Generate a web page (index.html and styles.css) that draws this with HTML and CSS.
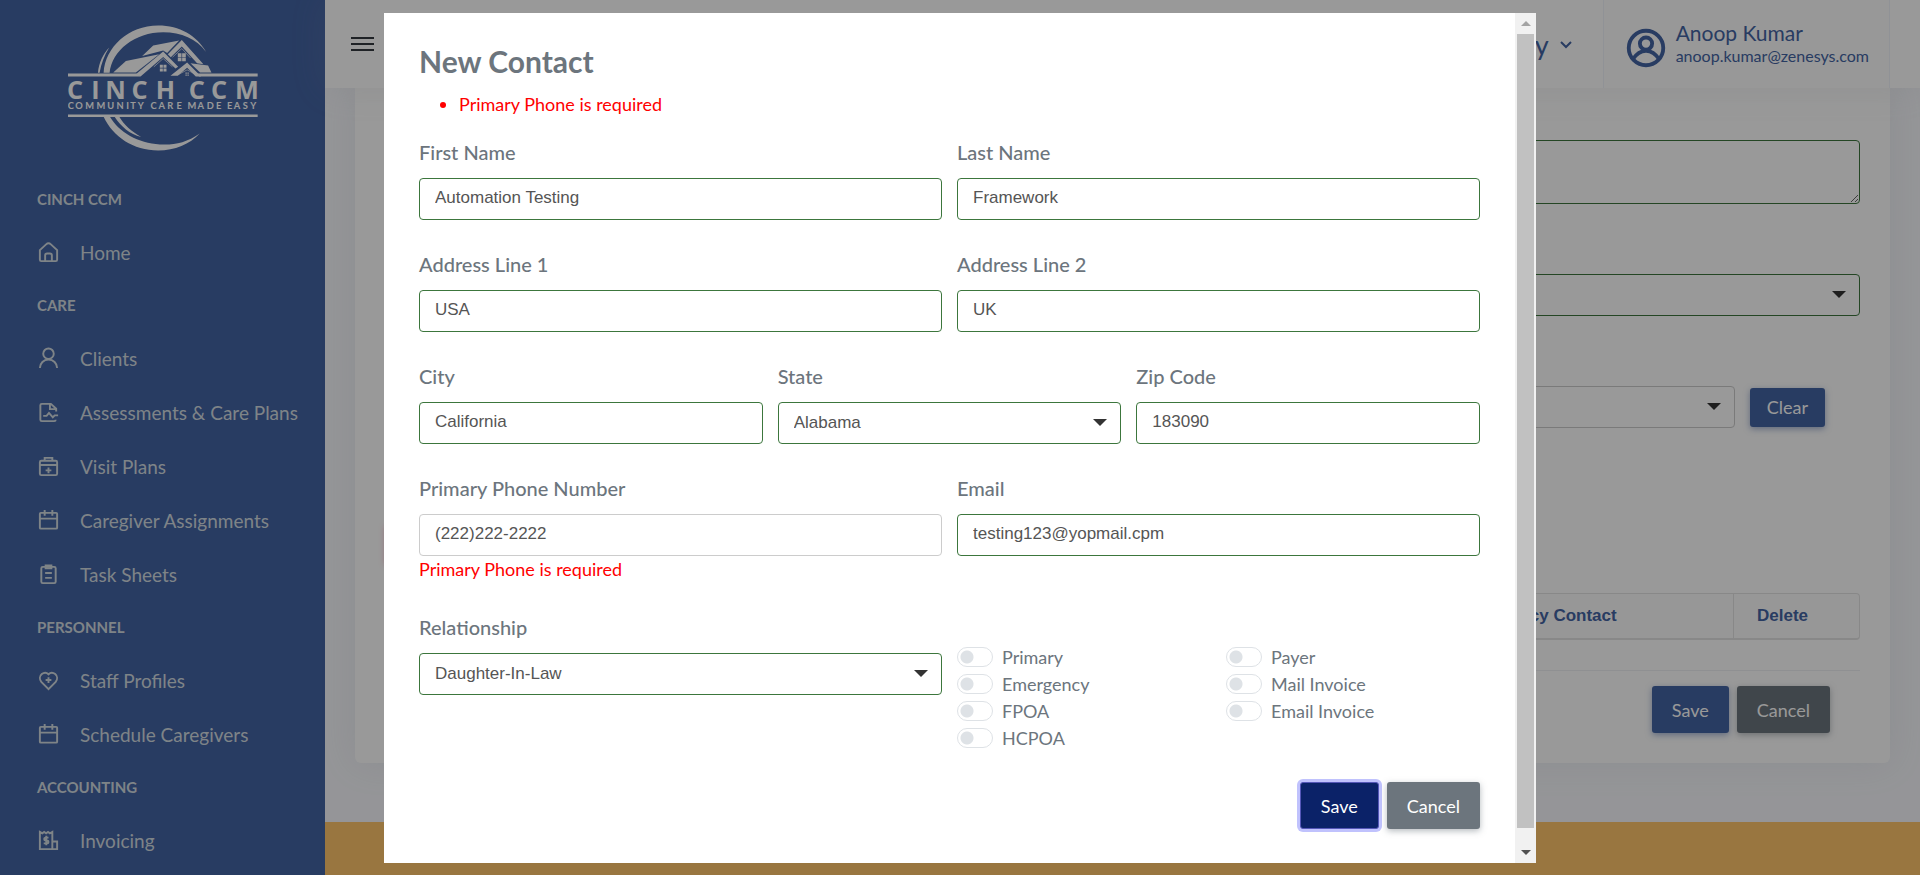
FILE: index.html
```html
<!DOCTYPE html>
<html lang="en">
<head>
<meta charset="utf-8">
<meta name="viewport" content="width=device-width, initial-scale=1">
<title>Cinch CCM - New Contact</title>
<link rel="stylesheet" href="styles.css">
</head>
<body>
<div class="app">
  <nav class="sidebar" aria-label="Main">
    <a class="logo" href="#" aria-label="Cinch CCM">
      <svg viewBox="204 74 571 377" width="190" height="126" fill="currentColor">
        <path d="M311 217C316 140 385 75 475 75C540 75 590 105 619 154C590 115 545 95 490 95C405 95 336 150 329 217Z"/>
        <path d="M294 217C297 187 309 160 328 141C313 164 304 190 299 217Z"/>
        <path d="M311 349C340 410 400 450 475 450C525 450 570 431 600 399C560 427 520 435 480 432C415 428 357 396 330 349Z"/>
        <path d="M344 349C362 377 390 402 424 410C397 395 371 372 358 349Z"/>
        <path d="M204 219H410L422 228H204ZM588 219H774V228H598ZM204 342H774V350H204Z"/>
        <path d="M340 216L378 181L478 161L408 216Z"/>
        <path d="M490 153L535 199L527 204L490 169L422 228L408 221Z"/>
        <path d="M427 166L460 135L538 120L502 157L490 150Z"/>
        <path d="M546 118L611 191L592 188L546 138L513 170L504 161Z"/>
        <path d="M562 186L604 228H588L562 202L534 226H512Z"/>
        <path d="M572 188L625 195L635 216H601Z"/>
        <path d="M534 158h11v11h-11zM547 158h11v11h-11zM534 171h11v11h-11zM547 171h11v11h-11zM480 193h9v9h-9zM491 193h9v9h-9zM480 204h9v9h-9zM491 204h9v9h-9zM557 216h4v4h-4zM563 216h4v4h-4zM557 222h4v4h-4zM563 222h4v4h-4z"/>
        <path d="M462 199L490 174L518 199M518 170L546 144L572 172M536 222L562 208L588 222" fill="none" stroke="currentColor" stroke-width="2"/>
        <text class="logo-name" y="296" x="201 274 316 395 468 513 567 634 706">CINCH CCM</text>
        <text class="logo-tag" y="327" x="203 226 256 290 322 350 379 391 414 436 452 476 502 530 545 563 593 621 649 665 682 702 729 752">COMMUNITY CARE MADE EASY</text>
      </svg>
    </a>
    <h2 class="nav-heading">CINCH CCM</h2>
    <ul class="nav-list">
      <li><a href="#"><svg class="icon" viewBox="0 0 24 24"><path d="M3 9.500L9.500 3.500Q12 1.200 14.500 3.500L21 9.500V19.500Q21 21 19.500 21H4.500Q3 21 3 19.500ZM8.500 21V15Q8.500 13 10.500 13H13.500Q15.500 13 15.500 15V21"/></svg>Home</a></li>
    </ul>
    <h2 class="nav-heading">CARE</h2>
    <ul class="nav-list">
      <li><a href="#"><svg class="icon" viewBox="0 0 24 24"><circle cx="12" cy="7" r="5.500"/><path d="M3 22a9 9 0 0 1 18 0"/></svg>Clients</a></li>
      <li><a href="#"><svg class="icon" viewBox="0 0 24 24"><path d="M20 11V8L14.500 3H5Q3.500 3 3.500 4.500V19.500Q3.500 21 5 21H18Q19.500 21 19.500 19.500M13.500 3V8.500H20M6.500 15.500H10L12.500 12.500L16.500 17L18.500 15H22"/></svg>Assessments &amp; Care Plans</a></li>
      <li><a href="#"><svg class="icon" viewBox="0 0 24 24"><rect x="3" y="6" width="18" height="15" rx="1.500"/><path d="M8 6V3H16V6M3 10.500H21M12 13V19M9 16H15"/></svg>Visit Plans</a></li>
      <li><a href="#"><svg class="icon" viewBox="0 0 24 24"><rect x="3" y="4" width="18" height="16.500" rx="1"/><path d="M3 10H21M8 1V7M16 1V7"/></svg>Caregiver Assignments</a></li>
      <li><a href="#"><svg class="icon" viewBox="0 0 24 24"><rect x="4.500" y="4" width="15" height="17" rx="1.500"/><path d="M9 2.500H15V5.500H9ZM8.500 10.500H15.500M8.500 15.500H15.500"/></svg>Task Sheets</a></li>
    </ul>
    <h2 class="nav-heading">PERSONNEL</h2>
    <ul class="nav-list">
      <li><a href="#"><svg class="icon" viewBox="0 0 24 24"><path d="M12 21L4.500 13.500C2.500 11 2.500 7.500 5 5.300C7.300 3.400 10 3.500 12 5.500C14 3.500 16.700 3.400 19 5.300C21.500 7.500 21.500 11 19.500 13.500ZM12 8.500V14.500M9 11.500H15"/></svg>Staff Profiles</a></li>
      <li><a href="#"><svg class="icon" viewBox="0 0 24 24"><rect x="3" y="4" width="18" height="16.500" rx="1"/><path d="M3 10H21M8 1V7M16 1V7"/></svg>Schedule Caregivers</a></li>
    </ul>
    <h2 class="nav-heading">ACCOUNTING</h2>
    <ul class="nav-list">
      <li><a href="#"><svg class="icon" viewBox="0 0 24 24"><path d="M3 3L5.500 4.500L7.500 3L9.500 4.500L11.500 3L13.500 4.500L16 3V21H3ZM16 13H21V21H16M12 9H8.800Q7.500 9.200 7.500 10.500T9 12H10.500Q12 12.200 12 13.500T10.500 15H7M9.700 7V17"/></svg>Invoicing</a></li>
    </ul>
  </nav>

  <div class="content">
    <header class="topbar">
      <button class="menu" type="button" aria-label="Toggle menu"><span></span><span></span><span></span></button>
      <button class="company" type="button">Company
        <svg viewBox="0 0 14 9" width="14" height="9"><path d="M2 2L7 7L12 2" fill="none" stroke="currentColor" stroke-width="2"/></svg>
      </button>
      <a class="user" href="#">
        <svg viewBox="0 0 24 24" width="46" height="46" fill="none" stroke="currentColor" stroke-width="2"><circle cx="12" cy="12" r="9"/><circle cx="12" cy="9.700" r="3.200"/><path d="M5 18Q8 13.500 12 13.500T19 18"/></svg>
        <span class="user-text"><span class="user-name">Anoop Kumar</span><span class="user-mail">anoop.kumar@zenesys.com</span></span>
      </a>
    </header>

    <main class="page">
      <section class="card">
        <textarea class="control valid" aria-label="Notes"></textarea>
        <div class="select"><select class="control valid" aria-label="Status"><option></option></select></div>
        <div class="clear-row">
          <div class="select"><select class="control" aria-label="Contact"><option></option></select></div>
          <button class="btn primary small" type="button">Clear</button>
        </div>
        <button class="btn danger small" type="button" aria-label="Add contact"></button>
        <table class="contacts">
          <thead><tr><td></td><th class="col-contact">Emergency Contact</th><th class="col-delete">Delete</th></tr></thead>
        </table>
        <div class="card-actions">
          <button class="btn primary" type="button">Save</button>
          <button class="btn secondary" type="button">Cancel</button>
        </div>
      </section>
    </main>
    <footer class="footer"></footer>
  </div>
</div>

<div class="backdrop">
  <div class="modal" role="dialog" aria-modal="true" aria-labelledby="modal-title">
    <form class="modal-body">
      <h1 id="modal-title">New Contact</h1>
      <ul class="errors"><li>Primary Phone is required</li></ul>
      <div class="row">
        <div class="field"><label for="first">First Name</label><input id="first" class="control valid" type="text" value="Automation Testing"></div>
        <div class="field"><label for="last">Last Name</label><input id="last" class="control valid" type="text" value="Framework"></div>
      </div>
      <div class="row">
        <div class="field"><label for="addr1">Address Line 1</label><input id="addr1" class="control valid" type="text" value="USA"></div>
        <div class="field"><label for="addr2">Address Line 2</label><input id="addr2" class="control valid" type="text" value="UK"></div>
      </div>
      <div class="row">
        <div class="field"><label for="city">City</label><input id="city" class="control valid" type="text" value="California"></div>
        <div class="field"><label for="state">State</label><div class="select"><select id="state" class="control valid"><option>Alabama</option></select></div></div>
        <div class="field"><label for="zip">Zip Code</label><input id="zip" class="control valid" type="text" value="183090"></div>
      </div>
      <div class="row">
        <div class="field"><label for="phone">Primary Phone Number</label><input id="phone" class="control" type="tel" value="(222)222-2222"><p class="error">Primary Phone is required</p></div>
        <div class="field"><label for="email">Email</label><input id="email" class="control valid" type="email" value="testing123@yopmail.cpm"></div>
      </div>
      <div class="row">
        <div class="field"><label for="rel">Relationship</label><div class="select"><select id="rel" class="control valid"><option>Daughter-In-Law</option></select></div></div>
        <div class="switches">
          <div>
            <label><input type="checkbox">Primary</label>
            <label><input type="checkbox">Emergency</label>
            <label><input type="checkbox">FPOA</label>
            <label><input type="checkbox">HCPOA</label>
          </div>
          <div>
            <label><input type="checkbox">Payer</label>
            <label><input type="checkbox">Mail Invoice</label>
            <label><input type="checkbox">Email Invoice</label>
          </div>
        </div>
      </div>
      <div class="modal-actions">
        <button class="btn primary focused" type="button">Save</button>
        <button class="btn secondary" type="button">Cancel</button>
      </div>
    </form>
    <div class="scrollbar">
      <button class="up" type="button" aria-label="Scroll up" disabled></button>
      <div class="thumb"></div>
      <button class="down" type="button" aria-label="Scroll down"></button>
    </div>
  </div>
</div>
</body>
</html>
```
FILE: styles.css
```css
:root {
  --ui: Lato, "Open Sans", sans-serif;
  --form: "Liberation Sans", Arial, sans-serif;
  --blue: #4464a3;
  --grey: #6c757d;
  --green: #3c763d;
}

* { box-sizing: border-box; }

body {
  margin: 0;
  font-family: var(--ui);
  font-size: 18px;
  color: var(--grey);
}

h1, h2, p, ul { margin: 0; padding: 0; }
ul { list-style: none; }
a { color: inherit; text-decoration: none; }
button { font-family: inherit; cursor: pointer; }

.app {
  display: flex;
  height: 100vh;
  overflow: hidden;
}

/* Sidebar */
.sidebar {
  flex: 0 0 325px;
  background: var(--blue);
  color: #d3dce2;
}
.logo {
  display: flex;
  justify-content: center;
  padding: 25px 0 22px;
  color: #fff;
}
.logo-name { font-family: "Open Sans", sans-serif; font-size: 76px; font-weight: 700; }
.logo-tag { font-family: Lato, sans-serif; font-size: 28px; font-weight: 700; }
.nav-heading {
  height: 52px;
  padding-left: 37px;
  font-size: 15px;
  font-weight: 700;
  line-height: 52px;
}
.nav-list a {
  display: flex;
  align-items: center;
  gap: 20px;
  height: 54px;
  padding-left: 37px;
  font-size: 19px;
  white-space: nowrap;
}
.icon {
  width: 23px;
  height: 23px;
  fill: none;
  stroke: currentColor;
  stroke-width: 2;
}

/* Page behind the dialog */
.content {
  flex: 1;
  display: flex;
  flex-direction: column;
  min-width: 0;
  background: #f8f9fd;
}
.topbar {
  display: flex;
  align-items: stretch;
  height: 88px;
  padding-right: 30px;
  background: #fff;
  box-shadow: 0 0 35px rgba(154, 161, 171, 0.15);
  z-index: 1;
}
.menu {
  display: flex;
  flex-direction: column;
  justify-content: center;
  gap: 4px;
  padding: 0 26px;
  border: 0;
  background: none;
}
.menu span {
  width: 23px;
  height: 2px;
  background: #343a40;
}
.company {
  display: flex;
  align-items: center;
  gap: 10px;
  margin-left: auto;
  padding: 0 30px;
  border: 0;
  background: none;
  color: var(--blue);
  font-size: 27px;
}
.user {
  display: flex;
  align-items: center;
  gap: 7px;
  padding: 0 20px 0 19px;
  border: 1px solid #f1f3fa;
  border-width: 0 1px;
  background: #fdfdfd;
  color: var(--blue);
}
.user svg { margin-top: 8px; }
.user-text { display: flex; flex-direction: column; }
.user-name { font-size: 21px; line-height: 24px; }
.user-mail { font-size: 16px; line-height: 22px; }
.page {
  flex: 1;
  padding: 0 30px;
}
.card {
  padding: 52px 30px 30px;
  border-radius: 0 0 6px 6px;
  background: #fff;
  box-shadow: 0 0 35px rgba(154, 161, 171, 0.15);
}
.card > .select,
.clear-row { margin-top: 70px; }
.clear-row {
  display: flex;
  align-items: center;
  gap: 15px;
  padding-right: 35px;
}
.clear-row .select { flex: 1; }
.contacts {
  width: 100%;
  height: 47px;
  margin-top: 30px;
  border: 1px solid #e3e3e3;
  border-bottom-width: 2px;
  border-spacing: 0;
  border-radius: 4px;
  background: #fcfcfc;
  color: var(--blue);
  font-family: var(--form);
  font-size: 17px;
  text-align: left;
}
.contacts th {
  padding: 0 23px;
  border-left: 1px solid #e3e3e3;
}
.col-contact { width: 300px; }
.col-delete { width: 126px; }
.card-actions {
  display: flex;
  justify-content: flex-end;
  gap: 8px;
  margin-top: 30px;
  padding: 15px 30px 0 0;
  border-top: 1px solid #eef0f4;
}
.footer {
  height: 53px;
  background: #ffc56c;
}

/* Form controls */
.field label {
  display: block;
  margin-bottom: 13px;
  font-size: 20px;
  font-weight: 500;
  line-height: 26px;
}
.control {
  display: block;
  width: 100%;
  height: 42px;
  padding: 0 15px 2px;
  border: 1px solid #ccc;
  border-radius: 4px;
  background: #fff;
  color: #555;
  font-family: var(--form);
  font-size: 17px;
  appearance: none;
}
.valid { border-color: var(--green); }
textarea.control { height: 64px; resize: vertical; }
.select { position: relative; }
.select::after {
  content: "";
  position: absolute;
  top: 17px;
  right: 14px;
  border: 7px solid transparent;
  border-top-color: #333;
  border-bottom-width: 0;
  pointer-events: none;
}
.btn {
  height: 47px;
  padding: 0 20px;
  border: 0;
  border-radius: 3px;
  color: #fff;
  font-size: 18px;
}
.small { height: 39px; padding: 0 17px; }
.primary { background: var(--blue); box-shadow: 0 2px 6px rgba(68, 100, 163, 0.5); }
.secondary { background: var(--grey); box-shadow: 0 2px 6px rgba(108, 117, 125, 0.5); }
.danger { display: block; margin-top: 96px; background: #fa5c7c; box-shadow: 0 2px 6px rgba(250, 92, 124, 0.4); }
.focused {
  border: 1px solid #5557b8;
  background: #0b2268;
  box-shadow: 0 0 0 3px #c0c2fd;
}

/* Dialog */
.backdrop {
  position: fixed;
  inset: 0;
  z-index: 10;
  display: flex;
  justify-content: center;
  padding: 13px 0 12px;
  background: rgba(0, 0, 0, 0.4);
}
.modal {
  display: flex;
  width: 60%;
  background: #fff;
}
.modal-body {
  flex: 1;
  padding: 28px 35px;
  overflow: hidden;
}
.modal h1 {
  margin-bottom: 10px;
  font-size: 30px;
  font-weight: 700;
  line-height: 40px;
}
.errors {
  margin-bottom: 21px;
  padding-left: 40px;
  list-style: disc;
  color: #f00;
  line-height: 27px;
}
.error { color: #f00; line-height: 27px; }
.row {
  display: grid;
  grid-auto-flow: column;
  grid-auto-columns: minmax(0, 1fr);
  gap: 15px;
  margin-bottom: 31px;
}
.switches {
  display: grid;
  grid-template-columns: 1fr 1fr;
  gap: 15px;
  padding-top: 29px;
}
.switches label {
  display: flex;
  align-items: center;
  gap: 9px;
  height: 27px;
}
.switches input {
  width: 36px;
  height: 20px;
  margin: 0;
  border: 1px solid #dee2e6;
  border-radius: 10px;
  background: radial-gradient(circle at 9px 9px, #dee2e6 6px, transparent 7px);
  appearance: none;
}
.modal-actions {
  display: flex;
  justify-content: flex-end;
  gap: 8px;
}

/* Scrollbar */
.scrollbar {
  display: flex;
  flex-direction: column;
  width: 21px;
  padding: 0 2px;
  background: #f1f1f1;
}
.scrollbar button {
  display: grid;
  place-items: center;
  height: 21px;
  padding: 0;
  border: 0;
  background: none;
}
.scrollbar button::before {
  content: "";
  border: 5px solid transparent;
}
.scrollbar .up::before { border-bottom-color: #a3a3a3; border-top-width: 0; }
.scrollbar .down::before { border-top-color: #505050; border-bottom-width: 0; }
.thumb {
  flex: 1;
  margin-bottom: 14px;
  background: #c1c1c1;
}
```
